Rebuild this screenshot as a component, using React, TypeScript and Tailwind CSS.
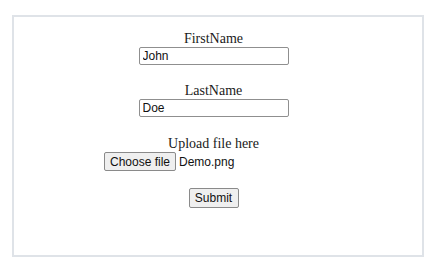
import React from 'react';

const serif = { fontFamily: '"Liberation Serif", "Times New Roman", serif' };

const Field: React.FC<{ label: string; value: string; className?: string }> = ({ label, value, className }) => (
  <div className={`flex flex-col items-center ${className ?? ''}`}>
    <span className="text-[14px] leading-[17px] text-[#1a1a1a] font-['Liberation_Serif',serif]">{label}</span>
    <input
      readOnly
      value={value}
      className="h-[18px] w-[150px] rounded-[2px] border border-[#8f8f8f] bg-white px-[3px] text-[12px] text-[#111] outline-none font-['Liberation_Sans',Arial,sans-serif]"
    />
  </div>
);

export default function App() {
  return (
    <div className="h-[271px] w-[439px] bg-white pl-[12px] pt-[15px]">
      <div className="flex h-[242px] w-[412px] flex-col items-center border-2 border-[#dfe3e8] pr-[9px] pt-[13px]">
        <Field label="FirstName" value="John" />
        <Field label="LastName" value="Doe" className="mt-[17px]" />
        <div className="mt-[18px] flex flex-col items-center">
          <span className="text-[14px] leading-[17px] text-[#1a1a1a]" style={serif}>
            Upload file here
          </span>
          <div className="flex w-[219px] items-center gap-[3px] font-['Liberation_Sans',Arial,sans-serif] text-[12px] text-[#111]">
            <button className="h-[19px] w-[72px] rounded-[2px] border border-[#8a8a8a] bg-[#efefef] text-[12px] leading-none">
              Choose file
            </button>
            <span>Demo.png</span>
          </div>
        </div>
        <button className="mt-[17px] h-[20px] w-[50px] rounded-[2px] border border-[#8a8a8a] bg-[#efefef] font-['Liberation_Sans',Arial,sans-serif] text-[12px] leading-none text-[#111]">
          Submit
        </button>
      </div>
    </div>
  );
}
